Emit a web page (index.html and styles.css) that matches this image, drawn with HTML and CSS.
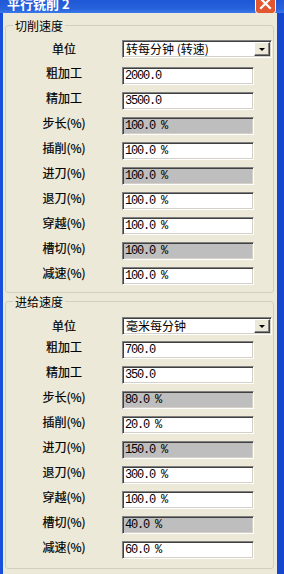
FILE: index.html
```html
<!DOCTYPE html>
<html>
    <head>
        <title>平行铣削 2</title>
        <link rel="stylesheet" href="styles.css">
    </head>
    <body>
        <div class="titlebar">
            <span class="title">平行铣削 2</span>
            <span class="close">
                <svg width="21" height="21" viewBox="0 0 21 21">
                    <rect x="0.5" y="0.5" width="20" height="20" rx="3" fill="#e2572f" stroke="#ffffff"/>
                    <path d="M6 6 L15 15 M15 6 L6 15" stroke="#ffffff" stroke-width="2.2" stroke-linecap="square"/>
                </svg>
            </span>
        </div>
        <div class="frame">
            <fieldset class="group">
                <legend>切削速度</legend>
                <div class="row row-unit">
                    <label>单位</label>
                    <div class="combo">
                        <span class="combo-text">转每分钟 (转速)</span>
                        <span class="combo-btn"><i class="arrow"></i></span>
                    </div>
                </div>
                <div class="row"><label>粗加工</label><div class="field">2000.0</div></div>
                <div class="row"><label>精加工</label><div class="field">3500.0</div></div>
                <div class="row"><label>步长(%)</label><div class="field disabled">100.0 %</div></div>
                <div class="row"><label>插削(%)</label><div class="field">100.0 %</div></div>
                <div class="row"><label>进刀(%)</label><div class="field disabled">100.0 %</div></div>
                <div class="row"><label>退刀(%)</label><div class="field">100.0 %</div></div>
                <div class="row"><label>穿越(%)</label><div class="field">100.0 %</div></div>
                <div class="row"><label>槽切(%)</label><div class="field disabled">100.0 %</div></div>
                <div class="row"><label>减速(%)</label><div class="field">100.0 %</div></div>
            </fieldset>
            <fieldset class="group group-feed">
                <legend>进给速度</legend>
                <div class="row row-unit">
                    <label>单位</label>
                    <div class="combo">
                        <span class="combo-text">毫米每分钟</span>
                        <span class="combo-btn"><i class="arrow"></i></span>
                    </div>
                </div>
                <div class="row"><label>粗加工</label><div class="field">700.0</div></div>
                <div class="row"><label>精加工</label><div class="field">350.0</div></div>
                <div class="row"><label>步长(%)</label><div class="field disabled">80.0 %</div></div>
                <div class="row"><label>插削(%)</label><div class="field">20.0 %</div></div>
                <div class="row"><label>进刀(%)</label><div class="field disabled">150.0 %</div></div>
                <div class="row"><label>退刀(%)</label><div class="field">300.0 %</div></div>
                <div class="row"><label>穿越(%)</label><div class="field">100.0 %</div></div>
                <div class="row"><label>槽切(%)</label><div class="field disabled">40.0 %</div></div>
                <div class="row"><label>减速(%)</label><div class="field">60.0 %</div></div>
            </fieldset>
        </div>
    </body>
</html>
```

FILE: styles.css
```css
html {
    height:100%;
}

body {
    margin:0;
    padding:0;
    width:284px;
    height:574px;
    overflow:hidden;
    background:#ECE9D8;
    font-family:"Noto Sans CJK SC", sans-serif;
    font-size:12px;
    color:#000;
}

.titlebar {
    height:13px;
    display:flex;
    justify-content:space-between;
    align-items:flex-start;
    overflow:hidden;
    background:linear-gradient(#1f57d6, #2863dc 70%, #3a78ea);
}

.title {
    color:#fff;
    font-weight:bold;
    font-size:13px;
    line-height:16px;
    margin:-4px 0 0 7px;
}

.close {
    width:21px;
    height:21px;
    margin:-7px 8px 0 0;
}

.frame {
    height:561px;
    box-sizing:border-box;
    padding:6px 3px 0 2px;
    border-left:3px solid #1a4fd8;
    border-right:7px solid #1646d0;
}

.group {
    margin:0 0 2px 0;
    padding:8px 0 0 0;
    border:1px solid #d0d0bf;
    border-radius:3px;
}

.group legend {
    margin-left:7px;
    padding:0 2px;
    font-size:12px;
    line-height:13px;
}

.row {
    display:grid;
    grid-template-columns:116px 150px;
    height:25px;
    align-items:start;
}

.row-unit {
    height:27px;
}

.group-feed .row-unit {
    height:24px;
}

.group-feed {
    padding-top:9px;
    padding-bottom:2px;
}

.row label {
    text-align:center;
    line-height:13px;
    margin-top:-1px;
    -webkit-text-stroke:0.2px #000;
}

.row-unit label {
    margin-top:2px;
}

.field {
    width:132px;
    height:18px;
    box-sizing:border-box;
    background:#fff;
    border:1px solid;
    border-color:#808080 #fff #fff #808080;
    box-shadow:inset 1px 1px 0 #404040, inset -1px -1px 0 #d4d0c8;
    padding:0 0 0 2px;
    font-family:"Liberation Mono", monospace;
    font-size:12px;
    letter-spacing:-1.2px;
    line-height:17px;
    white-space:pre;
}

.field.disabled {
    background:#bebebe;
}

.combo {
    width:150px;
    height:18px;
    box-sizing:border-box;
    background:#fff;
    border:1px solid;
    border-color:#808080 #fff #fff #808080;
    box-shadow:inset 1px 1px 0 #404040, inset -1px -1px 0 #d4d0c8;
    display:flex;
    justify-content:space-between;
    align-items:center;
    padding:0 1px 0 3px;
}

.combo-text {
    line-height:14px;
}

.combo-btn {
    width:16px;
    height:14px;
    box-sizing:border-box;
    background:#ECE9D8;
    border:1px solid;
    border-color:#fff #404040 #404040 #fff;
    box-shadow:inset -1px -1px 0 #808080;
    display:flex;
    justify-content:center;
    align-items:center;
}

.arrow {
    width:0;
    height:0;
    border-left:3px solid transparent;
    border-right:3px solid transparent;
    border-top:3px solid #000;
}
```
